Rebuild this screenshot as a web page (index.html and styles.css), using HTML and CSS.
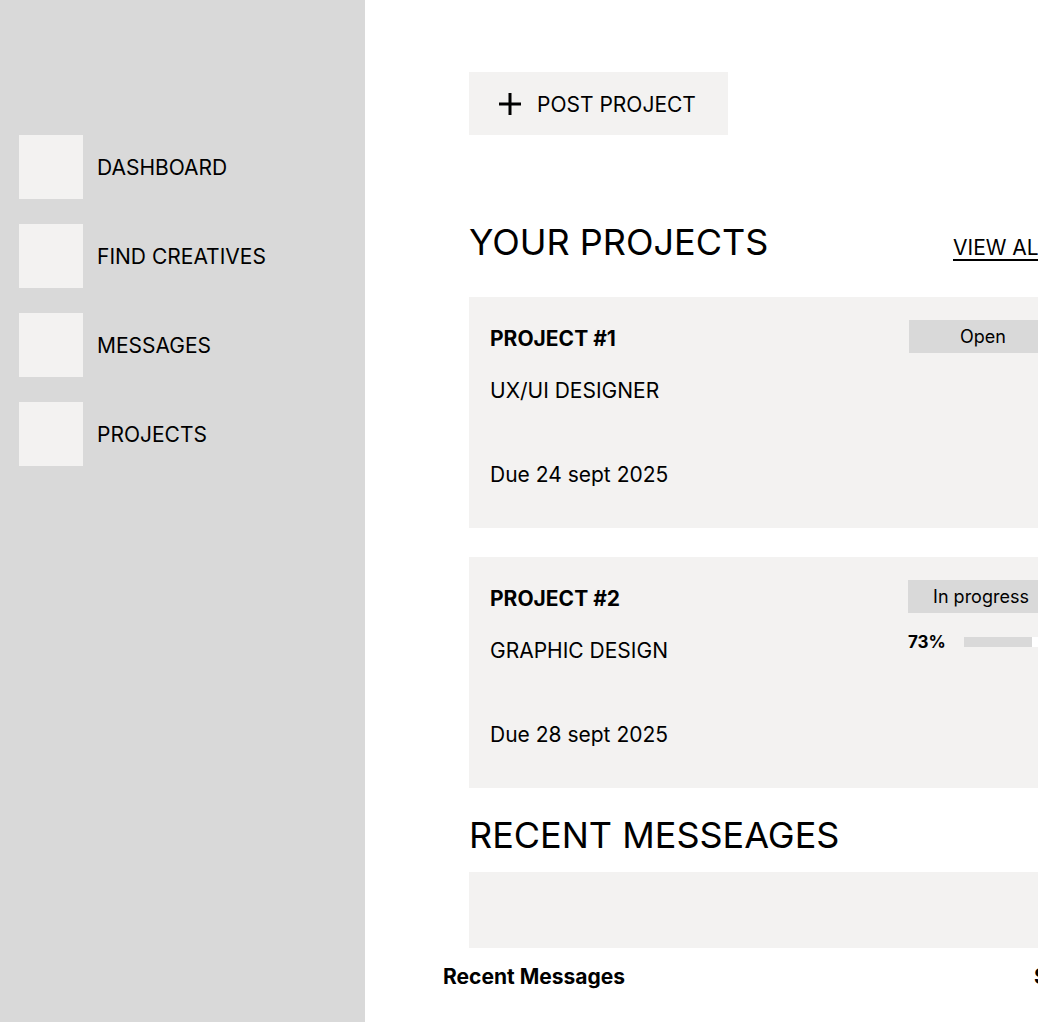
FILE: index.html
```html
<!DOCTYPE html>
<html lang="en">
<head>
<meta charset="utf-8">
<title>Dashboard</title>
<link rel="stylesheet" href="styles.css">
</head>
<body>
<div class="app">
  <aside class="sidebar">
    <nav class="nav">
      <a class="nav-item" href="#"><span class="nav-icon"></span><span class="nav-label">DASHBOARD</span></a>
      <a class="nav-item" href="#"><span class="nav-icon"></span><span class="nav-label">FIND CREATIVES</span></a>
      <a class="nav-item" href="#"><span class="nav-icon"></span><span class="nav-label">MESSAGES</span></a>
      <a class="nav-item" href="#"><span class="nav-icon"></span><span class="nav-label">PROJECTS</span></a>
    </nav>
  </aside>
  <main class="main">
    <button class="post-btn" type="button">
      <svg class="plus" width="22" height="22" viewBox="0 0 22 22"><path d="M11 0v22M0 11h22" stroke="#000" stroke-width="3" fill="none"/></svg>
      <span>POST PROJECT</span>
    </button>

    <div class="section-head">
      <h2 class="section-title">YOUR PROJECTS</h2>
      <a class="view-all" href="#">VIEW ALL</a>
    </div>

    <div class="card">
      <div class="card-info">
        <div class="card-title">PROJECT #1</div>
        <div class="card-role">UX/UI DESIGNER</div>
        <div class="card-due">Due 24 sept 2025</div>
      </div>
      <div class="card-side">
        <span class="badge badge-open">Open</span>
      </div>
    </div>

    <div class="card card-second">
      <div class="card-info">
        <div class="card-title">PROJECT #2</div>
        <div class="card-role">GRAPHIC DESIGN</div>
        <div class="card-due">Due 28 sept 2025</div>
      </div>
      <div class="card-side side-progress">
        <span class="badge badge-progress">In progress</span>
        <div class="progress-row">
          <span class="pct">73%</span>
          <div class="track"><div class="fill" style="width:73%"></div></div>
        </div>
      </div>
    </div>

    <h2 class="section-title recent-title">RECENT MESSEAGES</h2>
    <div class="message-box"></div>

    <div class="footer-row">
      <span class="footer-title">Recent Messages</span>
      <span class="footer-link">See all</span>
    </div>
  </main>
</div>
</body>
</html>
```
FILE: styles.css
```css
* { box-sizing: border-box; }

html, body {
  margin: 0;
  padding: 0;
  height: 100%;
  overflow: hidden;
  background: #ffffff;
  font-family: Inter, "Noto Sans", "Liberation Sans", sans-serif;
  color: #000;
}

.app {
  display: flex;
  height: 1022px;
  width: 100%;
  overflow: hidden;
}

.sidebar {
  flex: 0 0 365px;
  width: 365px;
  background: #d9d9d9;
  padding: 135px 0 0 19px;
}

.nav {
  display: flex;
  flex-direction: column;
  gap: 25px;
}

.nav-item {
  display: flex;
  align-items: center;
  gap: 14px;
  text-decoration: none;
  color: #000;
}

.nav-icon {
  width: 64px;
  height: 64px;
  background: #f3f2f1;
  flex: none;
}

.nav-label {
  font-size: 21px;
  line-height: 24px;
  padding-top: 2px;
  font-weight: 400;
}

.main {
  flex: 1 0 auto;
  padding: 72px 0 0 104px;
  min-width: 0;
}

.post-btn {
  display: flex;
  align-items: center;
  gap: 16px;
  width: 259px;
  height: 63px;
  padding: 1px 0 0 30px;
  border: none;
  background: #f3f2f1;
  font-family: inherit;
  font-size: 21px;
  color: #000;
  cursor: pointer;
}

.plus { flex: none; }

.section-head {
  display: flex;
  align-items: flex-end;
  margin-top: 85px;
}

.section-title {
  margin: 0;
  font-size: 36px;
  line-height: 44px;
  font-weight: 400;
}

.section-head .section-title { flex: 0 0 484px; }

.view-all {
  font-size: 21px;
  line-height: 24px;
  color: #000;
  text-decoration: underline;
  text-underline-offset: 4px;
  margin-bottom: 4px;
  white-space: nowrap;
}

.card {
  display: flex;
  justify-content: space-between;
  width: 609px;
  height: 231px;
  margin-top: 33px;
  padding: 23px 21px 0 21px;
  background: #f3f2f1;
}

.card-second { margin-top: 29px; }

.card-info {
  padding-top: 7px;
  font-size: 21px;
  line-height: 24px;
}

.card-title { font-weight: 700; }

.card-role { margin-top: 28px; }

.card-due { margin-top: 60px; }

.card-side {
  display: flex;
  flex-direction: column;
  align-items: flex-end;
}

.badge {
  display: flex;
  align-items: center;
  justify-content: center;
  height: 33px;
  background: #d9d9d9;
  font-size: 18px;
  line-height: 22px;
}

.badge-open { width: 148px; }

.side-progress { width: 149px; align-items: stretch; }

.badge-progress { width: 146px; }

.progress-row {
  display: flex;
  align-items: center;
  margin-top: 19px;
}

.pct {
  width: 56px;
  font-size: 17px;
  line-height: 20px;
  font-weight: 700;
}

.track {
  width: 93px;
  height: 10px;
  background: #ffffff;
}

.fill {
  height: 100%;
  background: #d9d9d9;
}

.recent-title { margin-top: 25px; }

.message-box {
  width: 609px;
  height: 76px;
  margin-top: 15px;
  background: #f3f2f1;
}

.footer-row {
  display: flex;
  margin: 17px 0 0 -26px;
  font-size: 21px;
  line-height: 24px;
  font-weight: 700;
  white-space: nowrap;
}

.footer-title { flex: 0 0 591px; }
```
